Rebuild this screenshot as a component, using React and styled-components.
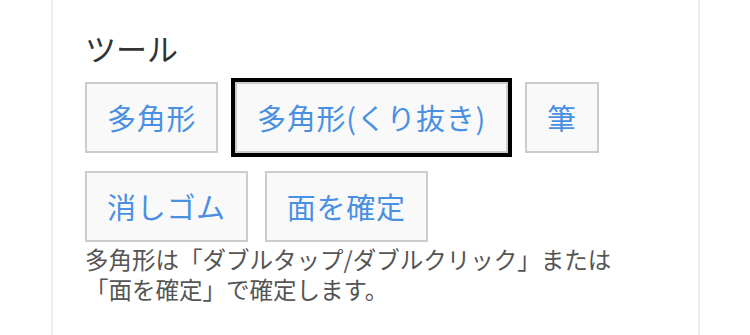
import React, { useState } from "react";
import styled, { createGlobalStyle } from "styled-components";

const GlobalStyle = createGlobalStyle`
  html, body {
    margin: 0;
    padding: 0;
    background: #fff;
  }
  body {
    font-family: "Noto Sans CJK JP", "Noto Sans", sans-serif;
  }
`;

const tools = ["多角形", "多角形(くり抜き)", "筆", "消しゴム", "面を確定"];

const App = () => {
  const [active, setActive] = useState("多角形(くり抜き)");

  return (
    <>
      <GlobalStyle />
      <Panel>
        <Title>ツール</Title>
        <ToolList>
          {tools.map((t) => (
            <ToolButton
              key={t}
              $active={active === t}
              onClick={() => setActive(t)}
            >
              {t}
            </ToolButton>
          ))}
        </ToolList>
        <Hint>
          多角形は「ダブルタップ/ダブルクリック」または
          <br />
          「面を確定」で確定します。
        </Hint>
      </Panel>
    </>
  );
};

export default App;

const Panel = styled.div`
  box-sizing: border-box;
  margin-left: 51px;
  width: 649px;
  height: 335px;
  padding: 26px 32px 0 32px;
  border-left: 2px solid #eeeeee;
  border-right: 2px solid #eeeeee;
  background: #fff;
`;

const Title = styled.h2`
  margin: 0 0 12px 0;
  font-size: 31px;
  font-weight: 400;
  line-height: 44px;
  color: #333;
`;

const ToolList = styled.div`
  display: flex;
  flex-wrap: wrap;
  column-gap: 17px;
  row-gap: 18px;
  width: 580px;
`;

const ToolButton = styled.button`
  box-sizing: border-box;
  height: 71px;
  padding: 0 20px;
  font-family: inherit;
  font-size: 29px;
  letter-spacing: 0.7px;
  line-height: 1;
  color: #4a90e2;
  background: #f9f9f9;
  border: 2px solid #cccccc;
  border-radius: 0;
  cursor: pointer;
  outline: ${(p) => (p.$active ? "4px solid #000" : "none")};
`;

const Hint = styled.p`
  margin: 2px 0 0 0;
  font-size: 23.5px;
  line-height: 30px;
  color: #555;
`;
